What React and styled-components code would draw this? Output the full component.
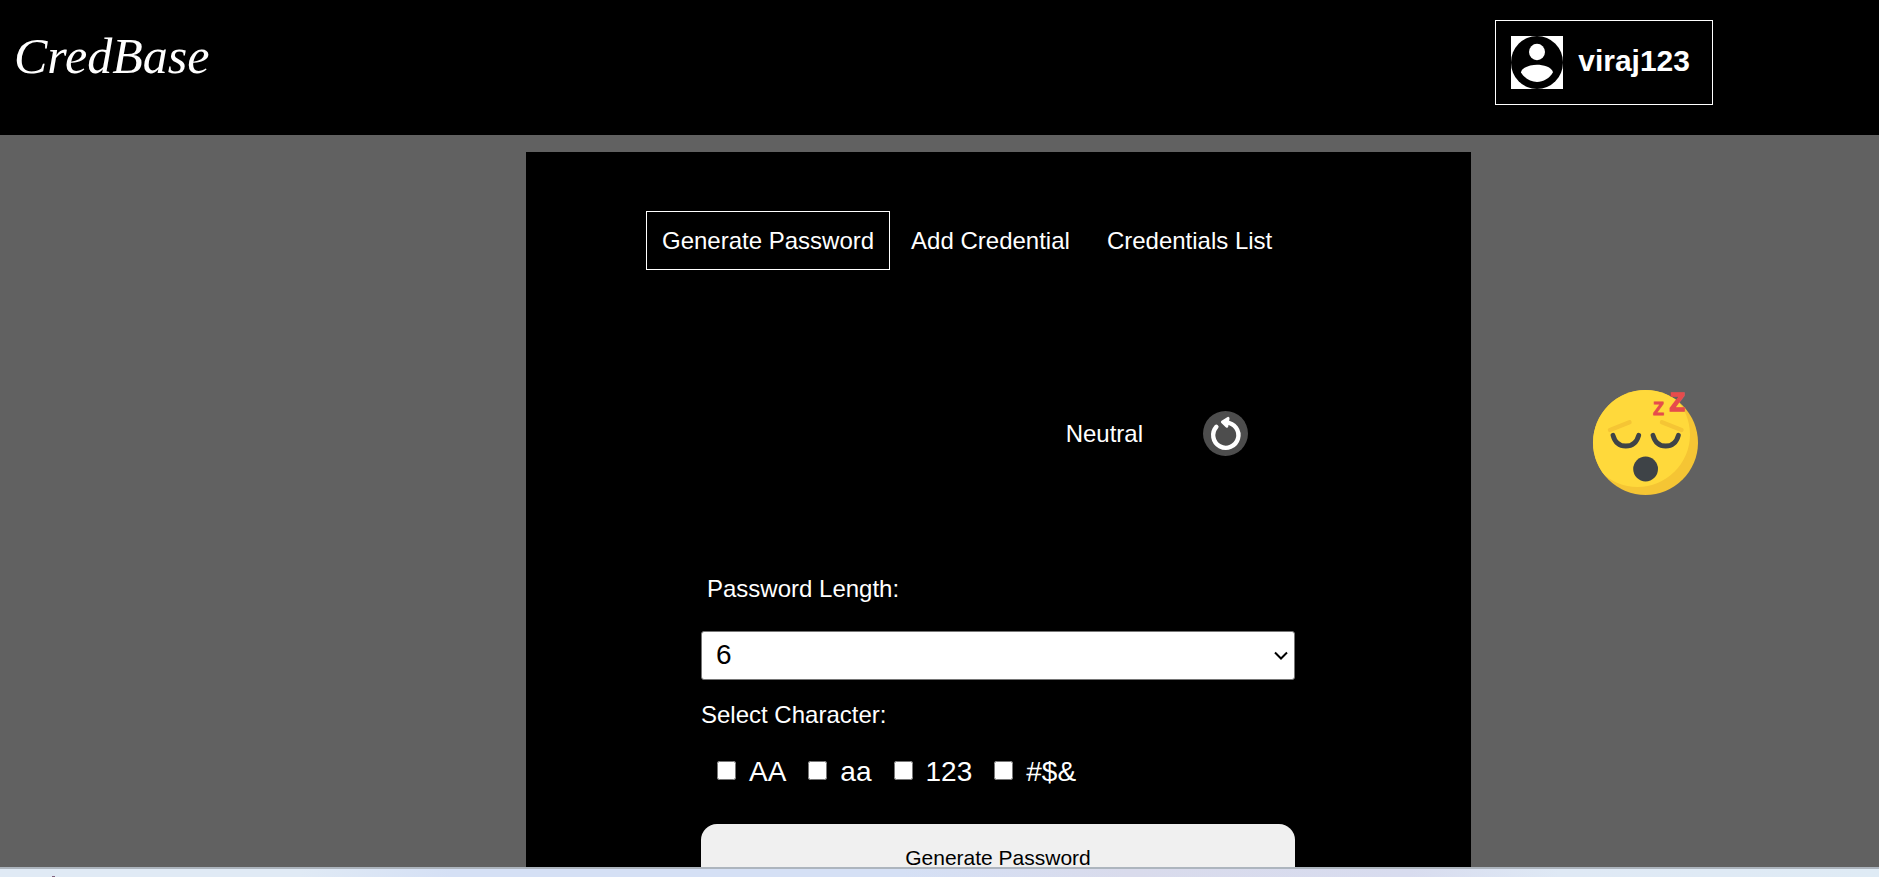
import React, { useState } from "react";
import styled, { createGlobalStyle } from "styled-components";

const GlobalStyle = createGlobalStyle`
  *, *::before, *::after { box-sizing: border-box; }
  body {
    margin: 0;
    background: #616161;
    color: #fff;
    font-family: "Liberation Sans", Arial, sans-serif;
    font-size: 24px;
  }
`;

const Page = styled.div`
  display: flex;
  flex-direction: column;
  height: 100vh;
  overflow: hidden;
`;

const Header = styled.header`
  display: flex;
  flex: none;
  justify-content: space-between;
  align-items: flex-start;
  padding: 20px 166px 30px 14px;
  background: #000;
`;

const Logo = styled.a`
  padding-top: 8px;
  color: #fff;
  font-family: "Liberation Serif", serif;
  font-size: 50px;
  font-style: italic;
  line-height: 56px;
  text-decoration: none;
`;

const UserButton = styled.button`
  display: flex;
  align-items: center;
  gap: 15px;
  padding: 15px 22px 15px 15px;
  border: 1px solid #fff;
  background: #000;
  color: #fff;
  font: bold 30px "Liberation Sans", Arial, sans-serif;
`;

const UserName = styled.span`
  padding-bottom: 4px;
`;

const Main = styled.main`
  display: grid;
  flex: 1;
  grid-template-columns: 526fr 945fr 408fr;
  min-height: 0;
  padding-top: 17px;
  overflow: hidden;
`;

const Panel = styled.section`
  grid-column: 2;
  padding-top: 59px;
  background: #000;
`;

const Tabs = styled.nav`
  display: flex;
  gap: 5px;
  padding-left: 120px;
`;

const Tab = styled.a`
  padding: 15px;
  border: 1px solid ${({ $active }) => ($active ? "#fff" : "#000")};
  color: #fff;
  line-height: 27px;
  text-decoration: none;
  white-space: nowrap;
`;

const Result = styled.div`
  display: flex;
  justify-content: flex-end;
  align-items: center;
  gap: 60px;
  margin: 141px 223px 119px 0;
`;

const RefreshButton = styled.button`
  display: block;
  padding: 0;
  border: 0;
  border-radius: 50%;
  background: none;
  line-height: 0;
`;

const Form = styled.form`
  display: flex;
  flex-direction: column;
  margin: 0 176px 0 175px;
`;

const LengthLabel = styled.label`
  padding-left: 6px;
  margin-bottom: 29px;
  line-height: 27px;
`;

const SelectBox = styled.div`
  display: flex;
  position: relative;
`;

const LengthSelect = styled.select`
  flex: 1;
  height: 49px;
  padding: 0 32px 2px 14px;
  border: 1px solid #767676;
  border-radius: 3px;
  appearance: none;
  background-color: #fff;
  color: #000;
  font: 28px "Liberation Sans", Arial, sans-serif;
`;

const SelectArrow = styled.svg`
  position: absolute;
  top: 20px;
  right: 6px;
  pointer-events: none;
`;

const CharacterSet = styled.fieldset`
  margin: 21px 0 36px;
  padding: 0;
  border: 0;
`;

const Legend = styled.legend`
  padding: 0;
  line-height: 27px;
`;

const Options = styled.div`
  display: flex;
  gap: 22px;
  padding: 28px 0 0 16px;
`;

const Option = styled.label`
  display: flex;
  align-items: center;
  gap: 13px;
  font-size: 28px;
  line-height: 32px;
`;

const Checkbox = styled.input`
  width: 19px;
  height: 19px;
  margin: 0 0 3px;
`;

const SubmitButton = styled.button`
  padding: 22px;
  border: 0;
  border-radius: 16px;
  background: #f0f0f0;
  color: #000;
  font: 21px/24px "Liberation Sans", Arial, sans-serif;
`;

const Aside = styled.aside`
  padding: 238px 0 0 122px;
`;

const Face = styled.svg`
  display: block;
  overflow: visible;
`;

const Taskbar = styled.footer`
  display: flex;
  flex: none;
  align-items: flex-end;
  height: 10px;
  padding-left: 52px;
  border-top: 2px solid #adb5be;
  background: linear-gradient(
    90deg,
    #e0eaf5 0%,
    #e0eaf5 16%,
    #d5e0f5 24%,
    #d5e0f5 48%,
    #d9dbec 60%,
    #d8dcef 75%,
    #dfe9f5 83%,
    #dfebf5 100%
  );
`;

const TaskMark = styled.span`
  width: 3px;
  height: 1px;
  background: #80607c;
`;

const Avatar = () => (
  <svg width="52" height="53" viewBox="0 0 52 53" aria-hidden="true">
    <rect width="52" height="53" fill="#fff" />
    <ellipse cx="26" cy="26.5" rx="26" ry="26.5" fill="#000" />
    <ellipse cx="26" cy="16" rx="8" ry="8.3" fill="#fff" />
    <path
      d="M10 36.2C11 31 20 28.7 26 28.7S41 31 42 36.2C39 42 32 46 26 46S13 42 10 36.2Z"
      fill="#fff"
    />
  </svg>
);

const RefreshIcon = () => (
  <svg width="45" height="45" viewBox="0 0 45 45" aria-hidden="true">
    <circle cx="22.5" cy="22.5" r="22.5" fill="#4d4d4d" />
    <path
      d="M13.4 15.8A12.6 12.6 0 1 0 23.4 11.6"
      fill="none"
      stroke="#fff"
      strokeWidth="4.4"
      strokeLinecap="round"
    />
    <path
      d="M19.4 11L25 7.4L23.8 15.2Z"
      fill="#fff"
      stroke="#fff"
      strokeWidth="3"
      strokeLinejoin="round"
    />
  </svg>
);

const SleepyFace = () => (
  <Face width="105" height="105" viewBox="0 0 105 105" role="img" aria-label="Sleeping face">
    <defs>
      <clipPath id="face">
        <circle cx="52.5" cy="52.5" r="52.5" />
      </clipPath>
    </defs>
    <circle cx="52.5" cy="52.5" r="52.5" fill="#f5c534" />
    <circle cx="44.5" cy="44.5" r="52.5" fill="#ffd93b" clipPath="url(#face)" />
    <g fill="none" strokeLinecap="round">
      <path d="M17 40L36.5 32.3M69 32.3L88.5 40" stroke="#f5c534" strokeWidth="4.4" />
      <path
        d="M20 45.3C22 52.6 27 56 32.8 56S43.7 52.6 45.7 45.3M60 45.3C62 52.6 67 56 72.7 56S83.4 52.6 85.4 45.3"
        stroke="#3e4347"
        strokeWidth="4.8"
      />
    </g>
    <circle cx="52.6" cy="79" r="12.4" fill="#3e4347" />
    <g fill="#e64c4c" fontFamily="Liberation Sans, Arial, sans-serif" fontWeight="bold">
      <text x="60" y="24.7" fontSize="18" stroke="#e64c4c" strokeWidth="0.8">Z</text>
      <text x="76.5" y="20.5" fontSize="25" stroke="#e64c4c" strokeWidth="1.4">Z</text>
    </g>
  </Face>
);

const tabs = ["Generate Password", "Add Credential", "Credentials List"];
const characterOptions = ["AA", "aa", "123", "#$&"];
const lengths = [6, 8, 10, 12, 14, 16];

export default function App() {
  const [active, setActive] = useState(tabs[0]);

  return (
    <Page>
      <GlobalStyle />
      <Header>
        <Logo href="#">CredBase</Logo>
        <UserButton type="button">
          <Avatar />
          <UserName>viraj123</UserName>
        </UserButton>
      </Header>
      <Main>
        <Panel>
          <Tabs>
            {tabs.map((tab) => (
              <Tab key={tab} href="#" $active={tab === active} onClick={() => setActive(tab)}>
                {tab}
              </Tab>
            ))}
          </Tabs>
          <Result>
            <span>Neutral</span>
            <RefreshButton type="button" aria-label="Refresh">
              <RefreshIcon />
            </RefreshButton>
          </Result>
          <Form onSubmit={(event) => event.preventDefault()}>
            <LengthLabel htmlFor="length">Password Length:</LengthLabel>
            <SelectBox>
              <LengthSelect id="length" defaultValue={6}>
                {lengths.map((length) => (
                  <option key={length}>{length}</option>
                ))}
              </LengthSelect>
              <SelectArrow width="16" height="10" viewBox="0 0 16 10" aria-hidden="true">
                <path d="M2 1.5L8 7.5L14 1.5" fill="none" stroke="#000" strokeWidth="2" />
              </SelectArrow>
            </SelectBox>
            <CharacterSet>
              <Legend>Select Character:</Legend>
              <Options>
                {characterOptions.map((option) => (
                  <Option key={option}>
                    <Checkbox type="checkbox" />
                    {option}
                  </Option>
                ))}
              </Options>
            </CharacterSet>
            <SubmitButton type="submit">Generate Password</SubmitButton>
          </Form>
        </Panel>
        <Aside>
          <SleepyFace />
        </Aside>
      </Main>
      <Taskbar>
        <TaskMark />
      </Taskbar>
    </Page>
  );
}
